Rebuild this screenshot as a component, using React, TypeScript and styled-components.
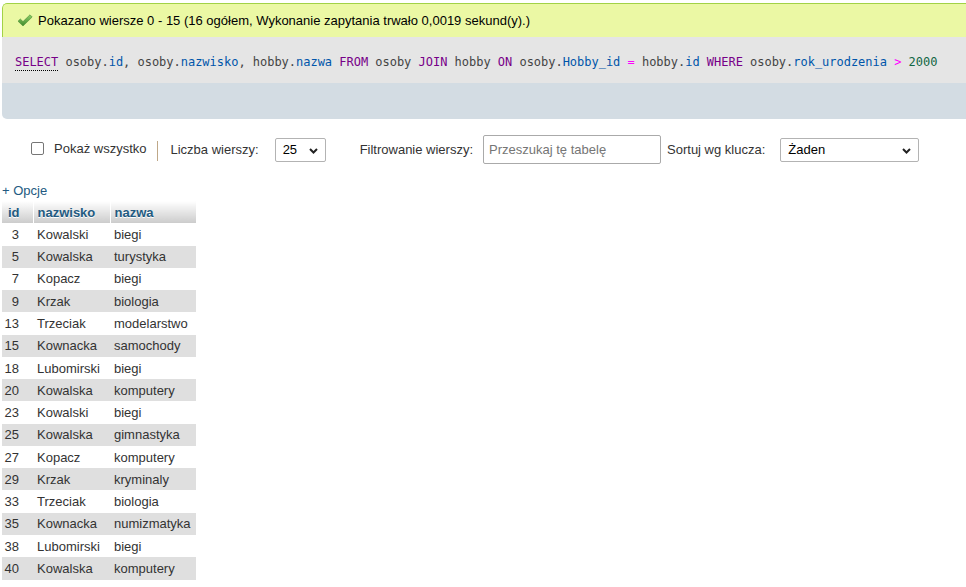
import React from "react";
import styled, { createGlobalStyle } from "styled-components";

const GlobalStyle = createGlobalStyle`
  html, body { margin: 0; padding: 0; background: #fff; }
  body {
    font-family: "Liberation Sans", Arial, sans-serif;
    font-size: 13px;
    color: #000;
    overflow: hidden;
  }
`;

const Page = styled.div`
  padding: 3px 0 0 2px;
`;

const ResultPanel = styled.div`
  border-radius: 5px 0 0 5px;
  overflow: hidden;
`;

const Success = styled.div`
  height: 33px;
  background: #ebf8a4;
  border-top: 1px solid #a2d246;
  border-left: 1px solid #a2d246;
  border-top-left-radius: 5px;
  display: flex;
  align-items: center;
  padding-left: 14px;
  gap: 5px;
  line-height: 15px;
`;

const SqlBox = styled.div`
  height: 46px;
  background: #e5e5e5;
  box-sizing: border-box;
  padding: 17px 0 0 13px;
  font-family: "DejaVu Sans Mono", monospace;
  font-size: 12px;
  letter-spacing: -0.02px;
  line-height: 16px;
  color: #444;
  white-space: pre;
`;

const Tools = styled.div`
  height: 36px;
  background: #d3dce3;
`;

const Tok = styled.span<{ $kind?: "kw" | "var" | "op" | "num" }>`
  color: ${(p) =>
    p.$kind === "kw"
      ? "#770088"
      : p.$kind === "var"
      ? "#0055aa"
      : p.$kind === "op"
      ? "#ff00ff"
      : p.$kind === "num"
      ? "#116644"
      : "#444"};
`;

const DocLink = styled.span`
  color: #770088;
  border-bottom: 1px dotted #000;
  padding-bottom: 1px;
`;

const Toolbar = styled.div`
  display: flex;
  align-items: center;
  height: 29px;
  margin-top: 16px;
`;

const Item = styled.div<{ $ml: number }>`
  margin-left: ${(p) => p.$ml}px;
  display: flex;
  align-items: center;
  flex: none;
`;

const CheckBox = styled.span`
  display: block;
  width: 13px;
  height: 13px;
  box-sizing: border-box;
  border: 1px solid #767676;
  border-radius: 2px;
  background: #fff;
  margin-bottom: 3px;
`;

const RaisedText = styled.span`
  color: #333;
  margin-bottom: 3px;
  line-height: 15px;
`;

const Separator = styled.span`
  display: block;
  width: 1px;
  height: 20px;
  background: #bfa888;
  margin-top: 2px;
`;

const LabelText = styled.span`
  color: #333;
  line-height: 15px;
`;

const SelectBox = styled.div<{ $w: number }>`
  position: relative;
  width: ${(p) => p.$w}px;
  height: 24px;
  box-sizing: border-box;
  border: 1px solid #b3b3b3;
  border-radius: 2px;
  background: #fff;
  display: flex;
  align-items: center;
  padding-left: 7px;
  color: #000;
`;

const Chevron = styled.svg`
  position: absolute;
  right: 7px;
  top: 9px;
`;

const TextInput = styled.div`
  width: 178px;
  height: 29px;
  box-sizing: border-box;
  border: 1px solid #aaa;
  border-radius: 2px;
  background: #fff;
  display: flex;
  align-items: center;
  padding-left: 5px;
  color: #757575;
`;

const Options = styled.div`
  margin-top: 19px;
  line-height: 15px;
  height: 15px;
  color: #235a81;
`;

const Table = styled.table`
  margin-top: 3px;
  border-collapse: collapse;
  table-layout: fixed;
  width: 194px;
`;

const Th = styled.th<{ $pl: number }>`
  height: 22.3px;
  padding: 0 0 0 ${(p) => p.$pl}px;
  text-align: left;
  font-weight: bold;
  color: #235a81;
  text-shadow: 0 1px 0 #fff;
  background: linear-gradient(#ffffff, #cccccc);
  border-right: 1px solid #fff;
  line-height: 15px;
  &:last-child { border-right: none; }
`;

const Tr = styled.tr<{ $odd: boolean }>`
  height: 22.27px;
  background: ${(p) => (p.$odd ? "#dfdfdf" : "#ffffff")};
`;

const Td = styled.td<{ $num?: boolean }>`
  padding: 0 ${(p) => (p.$num ? "14px" : "0")} 0 ${(p) => (p.$num ? "0" : "4px")};
  text-align: ${(p) => (p.$num ? "right" : "left")};
  color: #333;
  line-height: 15px;
  white-space: nowrap;
`;

const rows: [number, string, string][] = [
  [3, "Kowalski", "biegi"],
  [5, "Kowalska", "turystyka"],
  [7, "Kopacz", "biegi"],
  [9, "Krzak", "biologia"],
  [13, "Trzeciak", "modelarstwo"],
  [15, "Kownacka", "samochody"],
  [18, "Lubomirski", "biegi"],
  [20, "Kowalska", "komputery"],
  [23, "Kowalski", "biegi"],
  [25, "Kowalska", "gimnastyka"],
  [27, "Kopacz", "komputery"],
  [29, "Krzak", "kryminaly"],
  [33, "Trzeciak", "biologia"],
  [35, "Kownacka", "numizmatyka"],
  [38, "Lubomirski", "biegi"],
  [40, "Kowalska", "komputery"],
];

const SuccessIcon = () => (
  <svg width="16" height="13" viewBox="0 0 16 13">
    <defs>
      <linearGradient id="chk" x1="0" y1="0" x2="0" y2="1">
        <stop offset="0" stopColor="#8fcf6a" />
        <stop offset="1" stopColor="#3f8a2a" />
      </linearGradient>
    </defs>
    <path
      d="M1 7.2 L3.3 5 L6 7.6 L13 0.8 L15.2 3 L6 12 Z"
      fill="url(#chk)"
      stroke="#4c8f35"
      strokeWidth="0.6"
      strokeLinejoin="round"
    />
  </svg>
);

const ChevronIcon = () => (
  <Chevron width="9" height="6" viewBox="0 0 9 6">
    <path d="M1 1 L4.5 4.5 L8 1" fill="none" stroke="#222" strokeWidth="2" />
  </Chevron>
);

export default function App() {
  return (
    <>
      <GlobalStyle />
      <Page>
        <ResultPanel>
          <Success>
            <SuccessIcon />
            <span>Pokazano wiersze 0 - 15 (16 ogółem, Wykonanie zapytania trwało 0,0019 sekund(y).)</span>
          </Success>
          <SqlBox>
            <DocLink>SELECT</DocLink>
            <Tok> osoby.</Tok>
            <Tok $kind="var">id</Tok>
            <Tok>, osoby.</Tok>
            <Tok $kind="var">nazwisko</Tok>
            <Tok>, hobby.</Tok>
            <Tok $kind="var">nazwa</Tok>
            <Tok> </Tok>
            <Tok $kind="kw">FROM</Tok>
            <Tok> osoby </Tok>
            <Tok $kind="kw">JOIN</Tok>
            <Tok> hobby </Tok>
            <Tok $kind="kw">ON</Tok>
            <Tok> osoby.</Tok>
            <Tok $kind="var">Hobby_id</Tok>
            <Tok> </Tok>
            <Tok $kind="op">=</Tok>
            <Tok> hobby.</Tok>
            <Tok $kind="var">id</Tok>
            <Tok> </Tok>
            <Tok $kind="kw">WHERE</Tok>
            <Tok> osoby.</Tok>
            <Tok $kind="var">rok_urodzenia</Tok>
            <Tok> </Tok>
            <Tok $kind="op">&gt;</Tok>
            <Tok> </Tok>
            <Tok $kind="num">2000</Tok>
          </SqlBox>
          <Tools />
        </ResultPanel>

        <Toolbar>
          <Item $ml={29}>
            <CheckBox />
          </Item>
          <Item $ml={10}>
            <RaisedText>Pokaż wszystko</RaisedText>
          </Item>
          <Item $ml={11}>
            <Separator />
          </Item>
          <Item $ml={12}>
            <LabelText>Liczba wierszy:</LabelText>
          </Item>
          <Item $ml={16}>
            <SelectBox $w={51}>
              25
              <ChevronIcon />
            </SelectBox>
          </Item>
          <Item $ml={34}>
            <LabelText>Filtrowanie wierszy:</LabelText>
          </Item>
          <Item $ml={10}>
            <TextInput>Przeszukaj tę tabelę</TextInput>
          </Item>
          <Item $ml={6}>
            <LabelText>Sortuj wg klucza:</LabelText>
          </Item>
          <Item $ml={15}>
            <SelectBox $w={139}>
              Żaden
              <ChevronIcon />
            </SelectBox>
          </Item>
        </Toolbar>

        <Options>+ Opcje</Options>

        <Table>
          <colgroup>
            <col style={{ width: 31 }} />
            <col style={{ width: 77 }} />
            <col style={{ width: 86 }} />
          </colgroup>
          <thead>
            <tr>
              <Th $pl={6}>id</Th>
              <Th $pl={4}>nazwisko</Th>
              <Th $pl={4}>nazwa</Th>
            </tr>
          </thead>
          <tbody>
            {rows.map(([id, name, hobby], i) => (
              <Tr key={id} $odd={i % 2 === 1}>
                <Td $num>{id}</Td>
                <Td>{name}</Td>
                <Td>{hobby}</Td>
              </Tr>
            ))}
          </tbody>
        </Table>
      </Page>
    </>
  );
}
